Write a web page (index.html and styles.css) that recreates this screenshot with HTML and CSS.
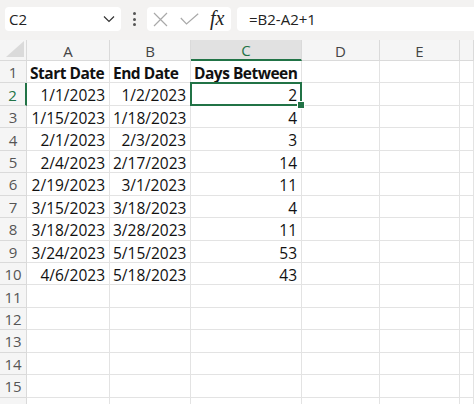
FILE: index.html
```html
<!DOCTYPE html>
<html>
<head>
<meta charset="utf-8">
<link rel="stylesheet" href="styles.css">
</head>
<body>
<div class="app">
  <div class="toolbar">
    <div class="namebox">
      <span class="name">C2</span>
      <svg class="chev" width="12" height="8" viewBox="0 0 12 8"><polyline points="1,1.5 6,6.5 11,1.5" fill="none" stroke="#333" stroke-width="1.2"/></svg>
    </div>
    <div class="grip"><i></i><i></i><i></i></div>
    <div class="fxbox">
      <svg class="ic-x" width="15" height="15" viewBox="0 0 15 15"><path d="M1 1 L14 14 M14 1 L1 14" stroke="#a9a9a9" stroke-width="1.2" fill="none"/></svg>
      <svg class="ic-check" width="19" height="12" viewBox="0 0 19 12"><path d="M0.8 5 L6.5 11 L18.2 0.8" stroke="#a9a9a9" stroke-width="1.2" fill="none"/></svg>
      <span class="fx">fx</span>
    </div>
    <div class="formula">=B2-A2+1</div>
  </div>
  <div class="sheet">
    <div class="hd corner"><span class="tri"></span></div>
    <div class="hd col">A</div>
    <div class="hd col">B</div>
    <div class="hd col active">C</div>
    <div class="hd col">D</div>
    <div class="hd col">E</div>
    <div class="hd col"></div>

    <div class="hd row">1</div>
    <div class="c b">Start Date</div>
    <div class="c b">End Date</div>
    <div class="c b">Days Between</div>
    <div class="c"></div><div class="c"></div><div class="c"></div>

    <div class="hd row active">2</div>
    <div class="c r">1/1/2023</div>
    <div class="c r">1/2/2023</div>
    <div class="c r sel">2</div>
    <div class="c"></div><div class="c"></div><div class="c"></div>

    <div class="hd row">3</div>
    <div class="c r">1/15/2023</div>
    <div class="c r">1/18/2023</div>
    <div class="c r">4</div>
    <div class="c"></div><div class="c"></div><div class="c"></div>

    <div class="hd row">4</div>
    <div class="c r">2/1/2023</div>
    <div class="c r">2/3/2023</div>
    <div class="c r">3</div>
    <div class="c"></div><div class="c"></div><div class="c"></div>

    <div class="hd row">5</div>
    <div class="c r">2/4/2023</div>
    <div class="c r">2/17/2023</div>
    <div class="c r">14</div>
    <div class="c"></div><div class="c"></div><div class="c"></div>

    <div class="hd row">6</div>
    <div class="c r">2/19/2023</div>
    <div class="c r">3/1/2023</div>
    <div class="c r">11</div>
    <div class="c"></div><div class="c"></div><div class="c"></div>

    <div class="hd row">7</div>
    <div class="c r">3/15/2023</div>
    <div class="c r">3/18/2023</div>
    <div class="c r">4</div>
    <div class="c"></div><div class="c"></div><div class="c"></div>

    <div class="hd row">8</div>
    <div class="c r">3/18/2023</div>
    <div class="c r">3/28/2023</div>
    <div class="c r">11</div>
    <div class="c"></div><div class="c"></div><div class="c"></div>

    <div class="hd row">9</div>
    <div class="c r">3/24/2023</div>
    <div class="c r">5/15/2023</div>
    <div class="c r">53</div>
    <div class="c"></div><div class="c"></div><div class="c"></div>

    <div class="hd row">10</div>
    <div class="c r">4/6/2023</div>
    <div class="c r">5/18/2023</div>
    <div class="c r">43</div>
    <div class="c"></div><div class="c"></div><div class="c"></div>

    <div class="hd row">11</div>
    <div class="c"></div><div class="c"></div><div class="c"></div><div class="c"></div><div class="c"></div><div class="c"></div>
    <div class="hd row">12</div>
    <div class="c"></div><div class="c"></div><div class="c"></div><div class="c"></div><div class="c"></div><div class="c"></div>
    <div class="hd row">13</div>
    <div class="c"></div><div class="c"></div><div class="c"></div><div class="c"></div><div class="c"></div><div class="c"></div>
    <div class="hd row">14</div>
    <div class="c"></div><div class="c"></div><div class="c"></div><div class="c"></div><div class="c"></div><div class="c"></div>
    <div class="hd row">15</div>
    <div class="c"></div><div class="c"></div><div class="c"></div><div class="c"></div><div class="c"></div><div class="c"></div>
    <div class="hd row"></div>
    <div class="c"></div><div class="c"></div><div class="c"></div><div class="c"></div><div class="c"></div><div class="c"></div>
  </div>
</div>
</body>
</html>
```

FILE: styles.css
```css
* { box-sizing: border-box; }
html, body { margin: 0; padding: 0; background: #fff; }
body { width: 474px; height: 404px; overflow: hidden; font-family: "Open Sans", "Noto Sans", sans-serif; }

.app { width: 474px; height: 404px; overflow: hidden; }

.toolbar {
  height: 40px;
  background: #f3f2f1;
  display: flex;
  align-items: flex-start;
  padding: 7px 0 0 5px;
}
.namebox {
  width: 116px;
  height: 24px;
  background: #fff;
  border-radius: 4px;
  display: flex;
  align-items: center;
  justify-content: space-between;
  padding: 0 6px 0 4px;
}
.name { font-size: 15px; color: #222; }
.chev { display: block; }

.grip {
  width: 26px;
  height: 24px;
  display: flex;
  flex-direction: column;
  align-items: center;
  justify-content: center;
  gap: 2.5px;
}
.grip i { width: 3px; height: 3px; border-radius: 50%; background: #555; display: block; }

.fxbox {
  width: 84px;
  height: 24px;
  background: #fff;
  border-radius: 4px;
  display: flex;
  align-items: center;
  padding-left: 6px;
}
.ic-x { display: block; margin-right: 12px; }
.ic-check { display: block; margin-right: 11px; }
.fx {
  font-family: "Liberation Serif", "DejaVu Serif", serif;
  font-style: italic;
  font-size: 20px;
  color: #222;
  line-height: 1;
  margin-top: -2px;
}

.formula {
  flex: 1;
  margin-left: 6px;
  height: 24px;
  background: #fff;
  border-radius: 4px 0 0 4px;
  font-size: 15px;
  color: #222;
  line-height: 24px;
  padding-left: 12px;
}

.sheet {
  display: grid;
  grid-template-columns: 27px 83px 81px 111px 78px 80px 1fr;
  grid-template-rows: 21px;
  grid-auto-rows: 22.45px;
}

.hd {
  background: #f5f5f5;
  color: #444;
  font-size: 15px;
  display: flex;
  align-items: center;
  justify-content: center;
  border-right: 1px solid #dadada;
  border-bottom: 1px solid #dadada;
}
.hd.col { padding-top: 1px; }
.hd.row { color: #555; padding-top: 1px; }
.hd.col.active {
  background: #e1e1e1;
  color: #217346;
  border-bottom: 2px solid #217346;
}
.hd.row.active {
  color: #217346;
  border-right: 2px solid #217346;
}
.corner {
  justify-content: flex-end;
  align-items: flex-end;
  padding: 0 2px 3px 0;
}
.tri {
  display: block;
  width: 18px;
  height: 16px;
  background: #dadada;
  clip-path: polygon(100% 0, 100% 100%, 0 100%);
}

.c {
  border-right: 1px solid #e3e3e3;
  border-bottom: 1px solid #e3e3e3;
  font-size: 15.5px;
  color: #111;
  line-height: 22px;
  padding: 1px 4px 0 3px;
  white-space: nowrap;
}
.c.b { font-weight: 700; letter-spacing: -0.5px; }
.c.r { text-align: right; }
.c.sel { position: relative; }
.c.sel::after {
  content: "";
  position: absolute;
  left: -1px;
  top: -1px;
  right: -1px;
  bottom: -1px;
  border: 2px solid #217346;
}
.c.sel::before {
  content: "";
  position: absolute;
  right: -4px;
  bottom: -4px;
  width: 6px;
  height: 6px;
  background: #217346;
  border: 1px solid #fff;
  z-index: 2;
}
```
